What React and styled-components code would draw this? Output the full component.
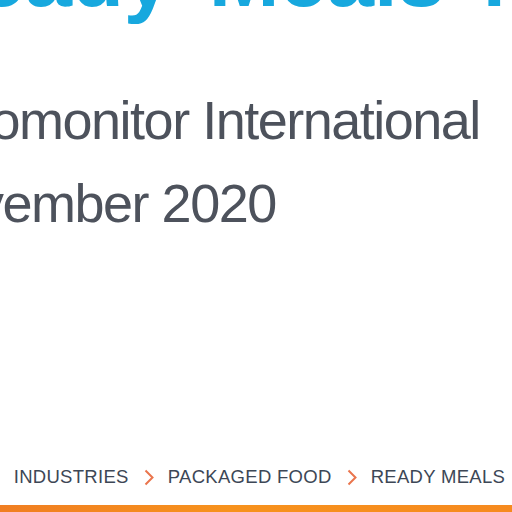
import styled, { createGlobalStyle } from "styled-components";

const GlobalStyle = createGlobalStyle`
  html, body {
    margin: 0;
    padding: 0;
    background: #ffffff;
    overflow: hidden;
  }
`;

const Page = styled.div`
  display: flex;
  flex-direction: column;
  width: 512px;
  height: 100vh;
  overflow: hidden;
  font-family: "Liberation Sans", Arial, sans-serif;
`;

const Content = styled.div`
  flex: 1;
  display: flex;
  flex-direction: column;
  margin-left: -77px;
  min-height: 0;
`;

const Title = styled.h1`
  margin: -66px 0 0 -7px;
  font-size: 85px;
  line-height: 85px;
  font-weight: 700;
  word-spacing: 14px;
  color: #17a8de;
  white-space: nowrap;
`;

const Meta = styled.div`
  margin: 60px 0 0 -12px;
  font-size: 54px;
  line-height: 83px;
  letter-spacing: -1.5px;
  color: #4d525c;
  white-space: nowrap;
`;

const MetaLine = styled.p`
  margin: 0;
`;

const Crumbs = styled.nav`
  margin: auto 0 17px -5px;
  display: flex;
  align-items: center;
  gap: 14px;
  height: 22px;
  font-size: 18.5px;
  line-height: 22px;
  letter-spacing: 0.3px;
  color: #3d4756;
  text-transform: uppercase;
  white-space: nowrap;
`;

const Crumb = styled.span`
  display: block;
`;

const Bar = styled.div`
  height: 7px;
  flex-shrink: 0;
  background: linear-gradient(90deg, #f07e22 0%, #f7921d 45%, #f68a1f 100%);
`;

function Chevron() {
  return (
    <svg width="11" height="17" viewBox="0 0 11 17">
      <polyline
        points="2.5,1.5 9.5,8.5 2.5,15.5"
        fill="none"
        stroke="#ea754d"
        strokeWidth="2"
      />
    </svg>
  );
}

const trail = ["Home", "Industries", "Packaged Food", "Ready Meals"];

export default function App() {
  return (
    <Page>
      <GlobalStyle />
      <Content>
        <Title>Ready Meals in</Title>
        <Meta>
          <MetaLine>Euromonitor International</MetaLine>
          <MetaLine>November 2020</MetaLine>
        </Meta>
        <Crumbs>
          {trail.map((item, i) => (
            <>
              {i > 0 && <Chevron key={"c" + i} />}
              <Crumb key={item}>{item}</Crumb>
            </>
          ))}
        </Crumbs>
      </Content>
      <Bar />
    </Page>
  );
}
